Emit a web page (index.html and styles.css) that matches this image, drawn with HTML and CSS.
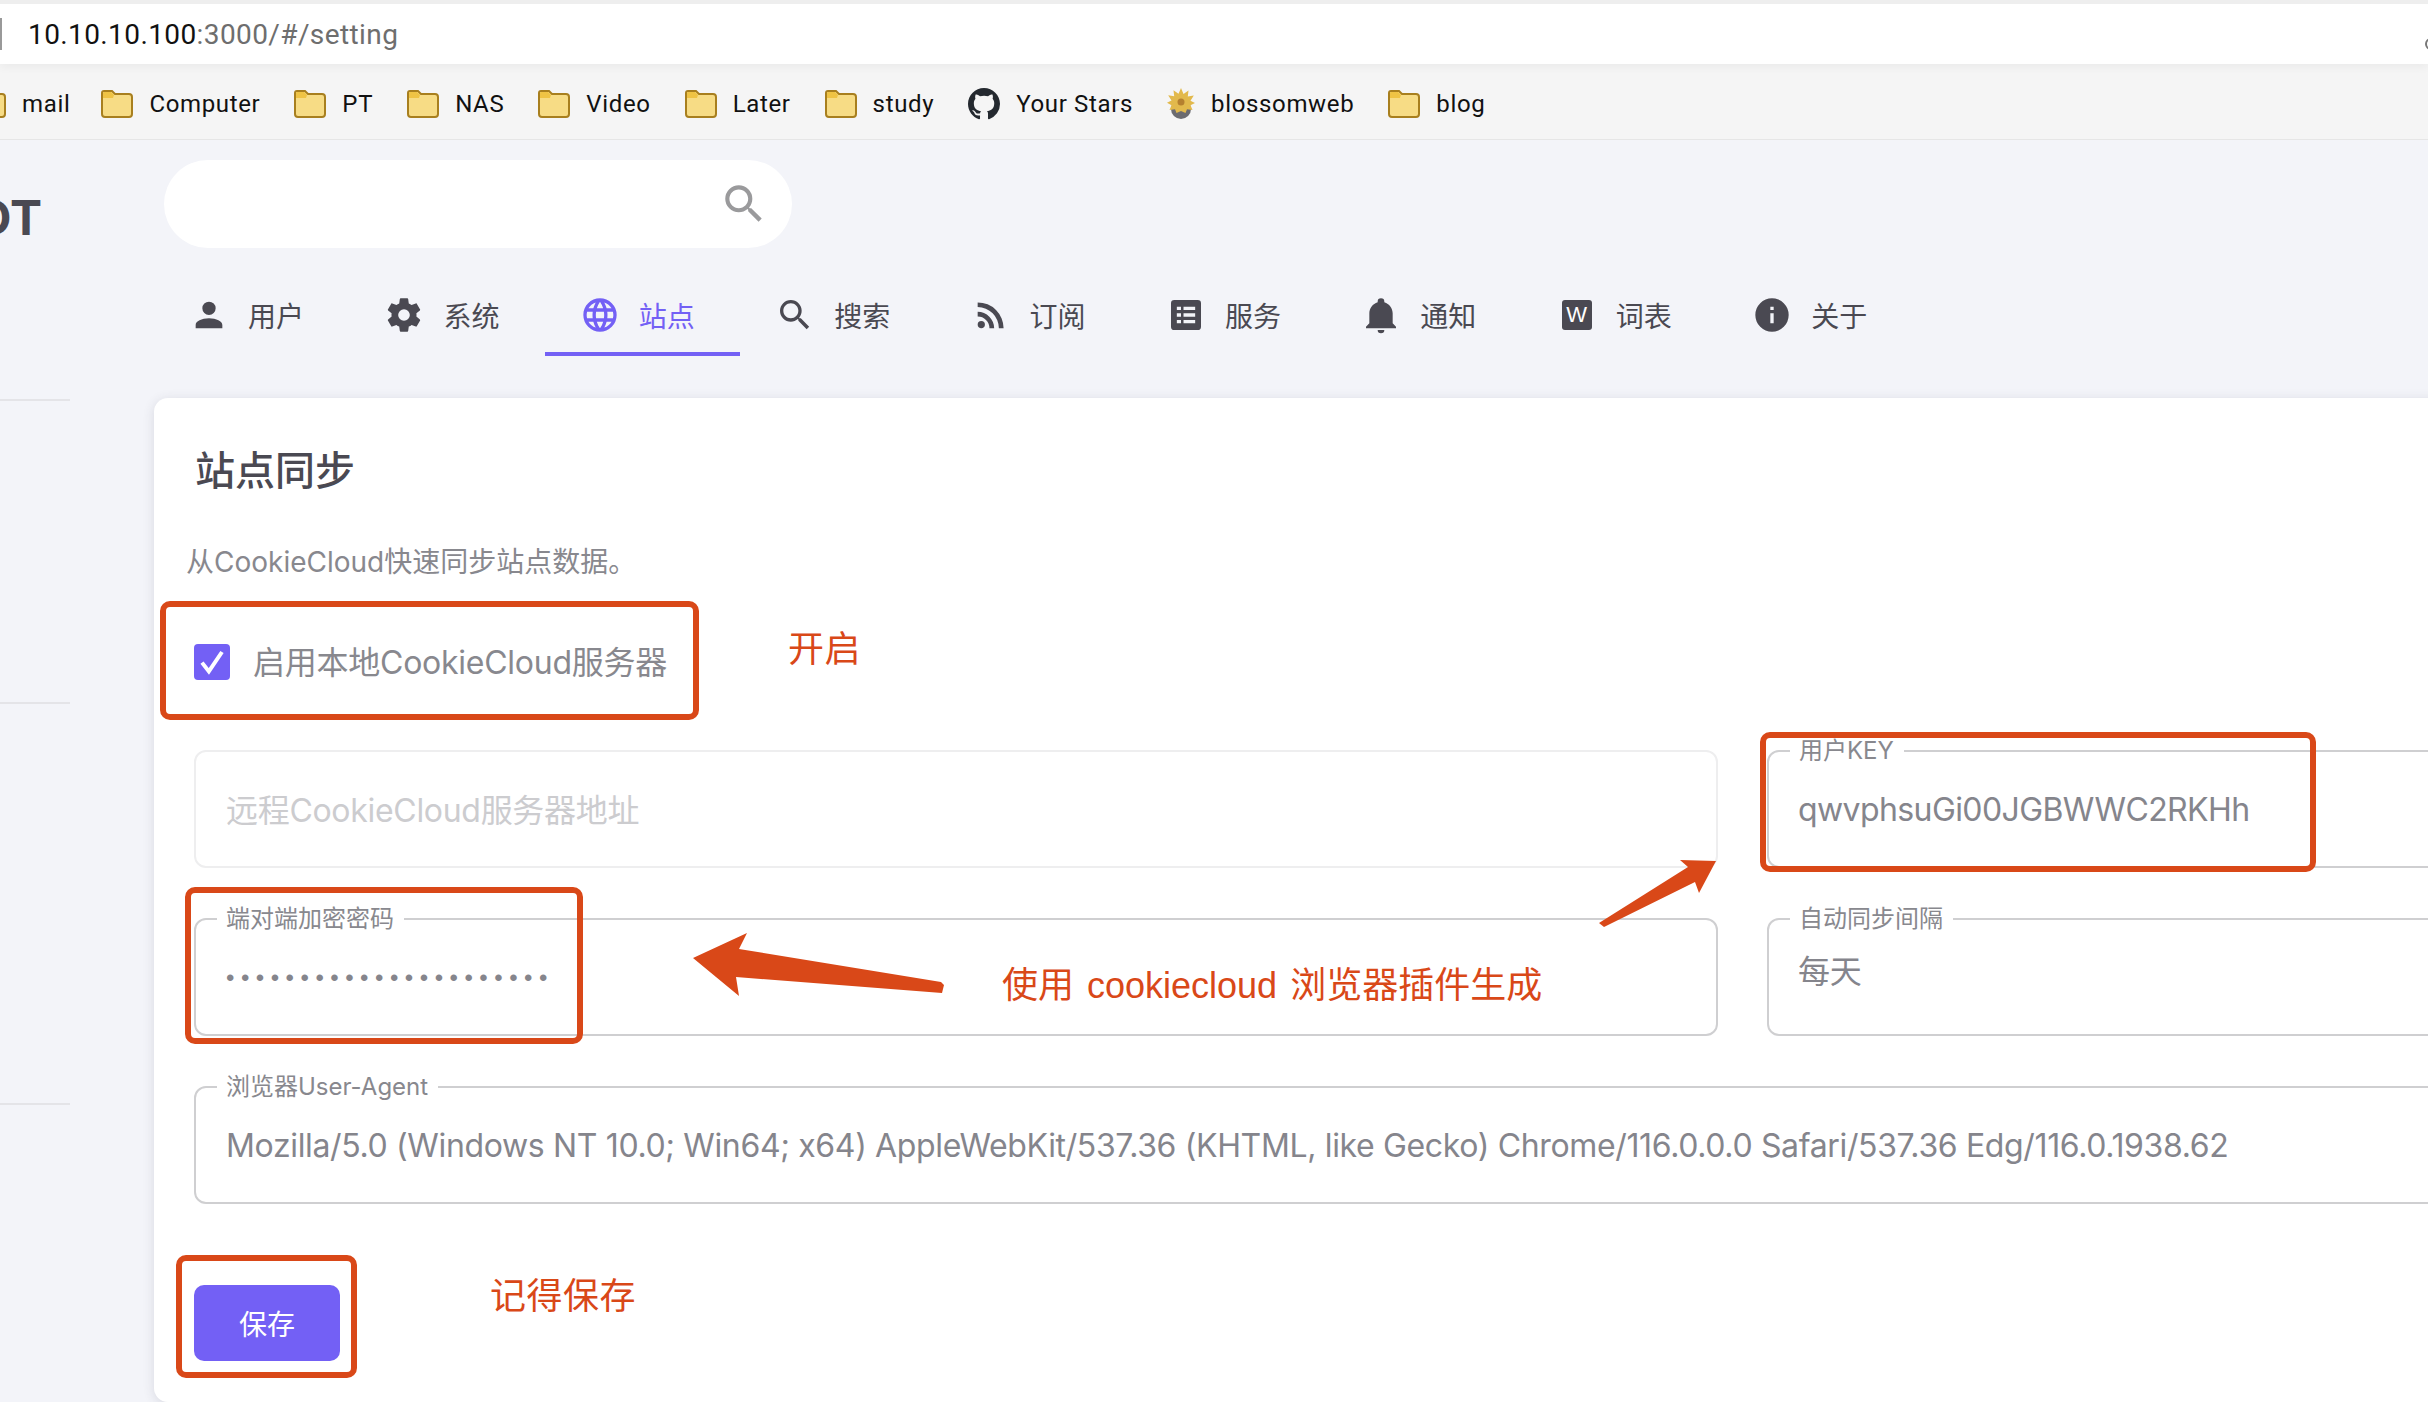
FILE: index.html
```html
<!DOCTYPE html>
<html lang="zh-CN">
<head>
    <meta charset="UTF-8">
    <meta name="viewport" content="width=device-width, initial-scale=1.0">
    <title>MoviePilot 设定</title>
    <link rel="stylesheet" href="styles.css">
</head>
<body>
    <svg class="icon-defs" width="0" height="0">
        <symbol id="folder" viewBox="0 0 32 28">
            <path d="M3 1h8l3 3h14a3 3 0 0 1 3 3v17a3 3 0 0 1-3 3H4a3 3 0 0 1-3-3V3a2 2 0 0 1 2-2z" fill="#f7dc85" stroke="#a87f1e" stroke-width="2"/>
            <path d="M3 2h7l3 3-1 3H2V3z" fill="#efc344"/>
        </symbol>
    </svg>

    <div class="url-bar">
        <span class="url-edge"></span>
        <span class="url-text">10.10.10.100<span class="url-rest">:3000/#/setting</span></span>
        <span class="url-star"></span>
    </div>

    <div class="bookmarks">
        <a class="bookmark bookmark-first"><svg class="folder-icon"><use href="#folder"/></svg>mail</a>
        <a class="bookmark"><svg class="folder-icon"><use href="#folder"/></svg>Computer</a>
        <a class="bookmark"><svg class="folder-icon"><use href="#folder"/></svg>PT</a>
        <a class="bookmark"><svg class="folder-icon"><use href="#folder"/></svg>NAS</a>
        <a class="bookmark"><svg class="folder-icon"><use href="#folder"/></svg>Video</a>
        <a class="bookmark"><svg class="folder-icon"><use href="#folder"/></svg>Later</a>
        <a class="bookmark"><svg class="folder-icon"><use href="#folder"/></svg>study</a>
        <a class="bookmark">
            <svg class="github-icon" viewBox="0 0 16 16"><path fill="#24292f" d="M8 0C3.58 0 0 3.58 0 8c0 3.54 2.29 6.53 5.47 7.59.4.07.55-.17.55-.38 0-.19-.01-.82-.01-1.49-2.01.37-2.53-.49-2.69-.94-.09-.23-.48-.94-.82-1.13-.28-.15-.68-.52-.01-.53.63-.01 1.08.58 1.23.82.72 1.21 1.87.87 2.33.66.07-.52.28-.87.51-1.07-1.78-.2-3.64-.89-3.64-3.95 0-.87.31-1.59.82-2.15-.08-.2-.36-1.02.08-2.12 0 0 .67-.21 2.2.82.64-.18 1.32-.27 2-.27.68 0 1.36.09 2 .27 1.53-1.04 2.2-.82 2.2-.82.44 1.1.16 1.92.08 2.12.51.56.82 1.27.82 2.15 0 3.07-1.87 3.75-3.65 3.95.29.25.54.73.54 1.48 0 1.07-.01 1.93-.01 2.2 0 .21.15.46.55.38A8.013 8.013 0 0016 8c0-4.42-3.58-8-8-8z"/></svg>
            Your Stars
        </a>
        <a class="bookmark">
            <svg class="flower-icon" viewBox="0 0 28 32">
                <circle cx="14" cy="21" r="10" fill="#6b6b70"/>
                <path fill="#e2b94c" d="M14 0l2.500 6 5-3.500-.7 6 6-1-3.300 5.200 4.500 2.300-4.500 2.300 2 4.700-5.500-.7-1.500 3.700-4.500-2-4.500 2-1.500-3.700-5.500.7 2-4.700L0 14.700l4.500-2.300L1.200 7.200l6 1-.7-6 5 3.500z"/>
                <circle cx="14" cy="14" r="3.500" fill="#b5802f"/>
            </svg>
            blossomweb
        </a>
        <a class="bookmark"><svg class="folder-icon"><use href="#folder"/></svg>blog</a>
    </div>

    <div class="app">
        <aside class="sidebar">
            <div class="logo"><span>LOT</span></div>
            <div class="side-line side-line-1"></div>
            <div class="side-line side-line-2"></div>
            <div class="side-line side-line-3"></div>
        </aside>

        <main class="main">
            <div class="search-box">
                <svg class="search-icon" viewBox="0 0 24 24"><path d="M9.5,3A6.5,6.5 0 0,1 16,9.500C16,11.110 15.410,12.590 14.440,13.730L14.710,14H15.500L20.500,19L19,20.500L14,15.500V14.710L13.730,14.440C12.590,15.410 11.110,16 9.500,16A6.500,6.500 0 0,1 3,9.500A6.500,6.500 0 0,1 9.500,3M9.500,5C7,5 5,7 5,9.500C5,12 7,14 9.500,14C12,14 14,12 14,9.500C14,7 12,5 9.500,5Z"/></svg>
            </div>

            <nav class="tabs">
                <a class="tab">
                    <svg class="tab-icon" viewBox="0 0 24 24"><path d="M12,4A4,4 0 0,1 16,8A4,4 0 0,1 12,12A4,4 0 0,1 8,8A4,4 0 0,1 12,4M12,14C16.42,14 20,15.79 20,18V20H4V18C4,15.79 7.58,14 12,14Z"/></svg>
                    用户
                </a>
                <a class="tab">
                    <svg class="tab-icon" viewBox="0 0 24 24"><path d="M12,15.5A3.5,3.5 0 0,1 8.5,12A3.5,3.5 0 0,1 12,8.5A3.5,3.5 0 0,1 15.5,12A3.5,3.5 0 0,1 12,15.5M19.43,12.97C19.47,12.65 19.5,12.33 19.5,12C19.5,11.67 19.47,11.34 19.43,11L21.54,9.37C21.73,9.22 21.78,8.95 21.66,8.73L19.66,5.27C19.54,5.05 19.27,4.96 19.05,5.05L16.56,6.05C16.04,5.66 15.5,5.32 14.87,5.07L14.5,2.42C14.46,2.18 14.25,2 14,2H10C9.75,2 9.54,2.18 9.5,2.42L9.13,5.07C8.5,5.32 7.96,5.66 7.44,6.05L4.95,5.05C4.73,4.96 4.46,5.05 4.34,5.27L2.34,8.73C2.21,8.95 2.27,9.22 2.46,9.37L4.57,11C4.53,11.34 4.5,11.67 4.5,12C4.5,12.33 4.53,12.65 4.57,12.97L2.46,14.63C2.27,14.78 2.21,15.05 2.34,15.27L4.34,18.73C4.46,18.95 4.73,19.03 4.95,18.95L7.44,17.94C7.96,18.34 8.5,18.68 9.13,18.93L9.5,21.58C9.54,21.82 9.75,22 10,22H14C14.25,22 14.46,21.82 14.5,21.58L14.87,18.93C15.5,18.67 16.04,18.34 16.56,17.94L19.05,18.95C19.27,19.03 19.54,18.95 19.66,18.73L21.66,15.27C21.78,15.05 21.73,14.78 21.54,14.63L19.43,12.97Z"/></svg>
                    系统
                </a>
                <a class="tab tab-active">
                    <svg class="tab-icon" viewBox="0 0 24 24"><path d="M16.36,14C16.44,13.34 16.5,12.68 16.5,12C16.5,11.32 16.44,10.66 16.36,10H19.74C19.9,10.64 20,11.31 20,12C20,12.69 19.9,13.36 19.74,14M14.59,19.56C15.19,18.45 15.65,17.25 15.97,16H18.92C17.96,17.65 16.43,18.93 14.59,19.56M14.34,14H9.66C9.56,13.34 9.5,12.68 9.5,12C9.5,11.32 9.56,10.65 9.66,10H14.34C14.43,10.65 14.5,11.32 14.5,12C14.5,12.68 14.43,13.34 14.34,14M12,19.96C11.17,18.76 10.5,17.43 10.09,16H13.91C13.5,17.43 12.83,18.76 12,19.96M8,8H5.08C6.03,6.34 7.57,5.06 9.4,4.44C8.8,5.55 8.35,6.75 8,8M5.08,16H8C8.35,17.25 8.8,18.45 9.4,19.56C7.57,18.93 6.03,17.65 5.08,16M4.26,14C4.1,13.36 4,12.69 4,12C4,11.31 4.1,10.64 4.26,10H7.64C7.56,10.66 7.5,11.32 7.5,12C7.5,12.68 7.56,13.34 7.64,14M12,4.03C12.83,5.23 13.5,6.57 13.91,8H10.09C10.5,6.57 11.17,5.23 12,4.03M18.92,8H15.97C15.65,6.75 15.19,5.55 14.59,4.44C16.43,5.07 17.96,6.34 18.92,8M12,2C6.47,2 2,6.5 2,12A10,10 0 0,0 12,22A10,10 0 0,0 22,12A10,10 0 0,0 12,2Z"/></svg>
                    站点
                </a>
                <a class="tab">
                    <svg class="tab-icon" viewBox="0 0 24 24"><path d="M9.5,3A6.5,6.5 0 0,1 16,9.500C16,11.110 15.410,12.590 14.440,13.730L14.710,14H15.500L20.500,19L19,20.500L14,15.500V14.710L13.730,14.440C12.590,15.410 11.110,16 9.500,16A6.500,6.500 0 0,1 3,9.500A6.500,6.500 0 0,1 9.500,3M9.500,5C7,5 5,7 5,9.500C5,12 7,14 9.500,14C12,14 14,12 14,9.500C14,7 12,5 9.500,5Z"/></svg>
                    搜索
                </a>
                <a class="tab">
                    <svg class="tab-icon" viewBox="0 0 24 24"><path d="M6.18,15.64A2.18,2.18 0 0,1 8.36,17.82C8.36,19 7.38,20 6.18,20C5,20 4,19 4,17.82A2.18,2.18 0 0,1 6.18,15.64M4,4.44A15.56,15.56 0 0,1 19.56,20H16.73A12.73,12.73 0 0,0 4,7.27V4.44M4,10.1A9.9,9.9 0 0,1 13.9,20H11.07A7.07,7.07 0 0,0 4,12.93V10.1Z"/></svg>
                    订阅
                </a>
                <a class="tab">
                    <svg class="tab-icon" viewBox="0 0 24 24"><path fill-rule="evenodd" d="M5 3h14a2 2 0 0 1 2 2v14a2 2 0 0 1-2 2H5a2 2 0 0 1-2-2V5a2 2 0 0 1 2-2zM6.500 7v2h2.500V7zM10.500 7v2h7V7zM6.500 11v2h2.500v-2zM10.500 11v2h7v-2zM6.500 15v2h2.500v-2zM10.500 15v2h7v-2z"/></svg>
                    服务
                </a>
                <a class="tab">
                    <svg class="tab-icon" viewBox="0 0 24 24"><path d="M21,19V20H3V19L5,17V11C5,7.9 7.03,5.17 10,4.29C10,4.19 10,4.1 10,4A2,2 0 0,1 12,2A2,2 0 0,1 14,4C14,4.1 14,4.19 14,4.29C16.97,5.17 19,7.9 19,11V17L21,19M14,21A2,2 0 0,1 12,23A2,2 0 0,1 10,21"/></svg>
                    通知
                </a>
                <a class="tab">
                    <span class="word-icon">W</span>
                    词表
                </a>
                <a class="tab">
                    <svg class="tab-icon" viewBox="0 0 24 24"><path d="M13,9H11V7H13M13,17H11V11H13M12,2A10,10 0 0,0 2,12A10,10 0 0,0 12,22A10,10 0 0,0 22,12A10,10 0 0,0 12,2Z"/></svg>
                    关于
                </a>
            </nav>

            <section class="card">
                <h2 class="card-title">站点同步</h2>
                <p class="card-sub">从CookieCloud快速同步站点数据。</p>

                <label class="check-row">
                    <span class="checkbox">
                        <svg viewBox="0 0 24 24"><path d="M4 12.500l5.500 7L20 4" fill="none" stroke="#fff" stroke-width="3.200"/></svg>
                    </span>
                    <span class="check-text">启用本地CookieCloud服务器</span>
                </label>

                <div class="field-grid">
                    <div class="field field-disabled"><span class="placeholder">远程CookieCloud服务器地址</span></div>
                    <div class="field">
                        <span class="field-label">用户KEY</span>
                        <span class="field-value field-key">qwvphsuGi00JGBWWC2RKHh</span>
                    </div>
                    <div class="field">
                        <span class="field-label">端对端加密密码</span>
                        <span class="field-dots">••••••••••••••••••••••</span>
                    </div>
                    <div class="field field-select">
                        <span class="field-label">自动同步间隔</span>
                        <span class="field-value">每天</span>
                    </div>
                    <div class="field field-wide">
                        <span class="field-label">浏览器User-Agent</span>
                        <span class="field-value">Mozilla/5.0 (Windows NT 10.0; Win64; x64) AppleWebKit/537.36 (KHTML, like Gecko) Chrome/116.0.0.0 Safari/537.36 Edg/116.0.1938.62</span>
                    </div>
                </div>

                <button class="save-btn">保存</button>
            </section>
        </main>
    </div>

    <!-- screenshot annotations drawn over the page -->
    <div class="mark mark-check"></div>
    <div class="mark mark-key"></div>
    <div class="mark mark-password"></div>
    <div class="mark mark-save"></div>
    <div class="note note-open">开启</div>
    <div class="note note-plugin">使用 cookiecloud 浏览器插件生成</div>
    <div class="note note-save">记得保存</div>
    <svg class="arrows" viewBox="0 0 2428 1402">
        <polygon points="1716,861 1680,860 1688,867 1599,923 1604,927 1695,882 1699,893"/>
        <polygon points="693,958 747,933 739,949 941,982 944,985 942,993 736,977 739,996"/>
    </svg>
</body>
</html>
```

FILE: styles.css
```css
* {
    box-sizing: border-box;
}
html, body {
    margin: 0;
    height: 1402px;
    overflow: hidden;
}
body {
    position: relative;
    font-family: Inter, "Noto Sans CJK SC", sans-serif;
    background-color: #f3f4f9;
    color: #4a4952;
}
.icon-defs {
    position: absolute;
}

/* browser chrome */
.url-bar {
    display: flex;
    align-items: center;
    height: 64px;
    padding-left: 28px;
    border-top: 4px solid #eeeeee;
    background: white;
    position: relative;
    box-shadow: 0 4px 8px rgba(0, 0, 0, 0.04);
}
.url-edge {
    position: absolute;
    left: 0;
    top: 14px;
    width: 2px;
    height: 32px;
    background-color: #999;
}
.url-text {
    font-family: Roboto, sans-serif;
    font-size: 28px;
    letter-spacing: 0.4px;
    color: #111;
}
.url-rest {
    color: #6e6e6e;
}
.url-star {
    position: absolute;
    left: 2425px;
    top: 34px;
    width: 12px;
    height: 12px;
    border: 2px solid #777;
    border-radius: 50%;
}
.bookmarks {
    display: flex;
    align-items: center;
    gap: 34px;
    height: 76px;
    margin-left: -26px;
    padding-top: 5px;
    background-color: #f5f5f5;
    border-bottom: 1px solid #e6e6e6;
}
.bookmark {
    display: flex;
    align-items: center;
    gap: 16px;
    font-family: Roboto, sans-serif;
    font-size: 24px;
    letter-spacing: 0.65px;
    color: #111;
    white-space: nowrap;
}
.bookmark-first {
    margin-right: -3px;
}
.folder-icon {
    width: 32px;
    height: 28px;
}
.github-icon {
    width: 32px;
    height: 32px;
}
.flower-icon {
    width: 28px;
    height: 32px;
}

/* app */
.app {
    display: flex;
}
.sidebar {
    width: 154px;
    flex-shrink: 0;
}
.logo {
    display: flex;
    justify-content: flex-end;
    align-items: center;
    width: 42px;
    height: 154px;
    overflow: hidden;
    font-size: 48px;
    font-weight: 700;
    color: #4a4952;
}
.side-line {
    width: 70px;
    height: 2px;
    background-color: #e4e4e8;
}
.side-line-1 {
    margin-top: 105px;
}
.side-line-2 {
    margin-top: 301px;
}
.side-line-3 {
    margin-top: 399px;
}
.main {
    width: 2274px;
    padding-top: 20px;
}
.search-box {
    display: flex;
    align-items: center;
    justify-content: flex-end;
    width: 628px;
    height: 88px;
    margin-left: 10px;
    padding-right: 23px;
    background: white;
    border-radius: 44px;
}
.search-icon {
    width: 50px;
    height: 50px;
    fill: #9a9a9c;
}
.tabs {
    display: flex;
    margin-top: 26px;
}
.tab {
    display: flex;
    align-items: center;
    gap: 19px;
    width: 195.4px;
    height: 82px;
    padding-left: 35px;
    font-size: 28px;
    color: #4a4952;
}
.tab-icon {
    width: 40px;
    height: 40px;
    fill: #4a4952;
}
.word-icon {
    display: flex;
    align-items: center;
    justify-content: center;
    width: 30px;
    height: 30px;
    margin: 0 5px;
    background-color: #4a4952;
    border-radius: 3px;
    color: white;
    font-family: "Liberation Sans", sans-serif;
    font-size: 22px;
}
.tab-active {
    color: #7360f5;
    border-bottom: 4px solid #7360f5;
    padding-top: 4px;
}
.tab-active .tab-icon {
    fill: #7360f5;
}

/* card */
.card {
    width: 2400px;
    height: 1004px;
    margin-top: 42px;
    padding: 49px 40px 0;
    background: white;
    border-radius: 14px;
    box-shadow: 0 2px 12px rgba(60, 60, 80, 0.14);
}
.card-title {
    margin: 0 0 0 1px;
    font-size: 40px;
    font-weight: 500;
    line-height: 48px;
    color: #4a4952;
}
.card-sub {
    margin: 47px 0 0 -8px;
    font-size: 28px;
    line-height: 40px;
    color: #88888e;
}
.check-row {
    display: flex;
    align-items: center;
    gap: 23px;
    height: 40px;
    margin-top: 60px;
    font-size: 32px;
    color: #88888e;
}
.check-text {
    padding-bottom: 4px;
    letter-spacing: -0.25px;
}
.checkbox {
    display: flex;
    width: 36px;
    height: 36px;
    padding: 3px;
    background-color: #7360f5;
    border-radius: 4px;
}
.field-grid {
    display: grid;
    grid-template-columns: 1524px 760px;
    gap: 50px 49px;
    margin-top: 68px;
}
.field {
    position: relative;
    display: flex;
    align-items: center;
    height: 118px;
    padding-left: 30px;
    border: 2px solid #cfcfd1;
    border-radius: 12px;
    font-size: 32px;
    color: #85858c;
    white-space: nowrap;
}
.field-disabled {
    border-color: #eeeeef;
}
.field-wide {
    grid-column: 1 / 3;
}
.field-select {
    align-items: flex-start;
    padding-top: 26px;
    padding-left: 29px;
}
.field-value {
    letter-spacing: -0.35px;
}
.field-key {
    margin-left: -1px;
    letter-spacing: -0.6px;
}
.field-label {
    position: absolute;
    left: 21px;
    top: -15px;
    padding: 0 10px 0 9px;
    background: white;
    font-size: 24px;
    line-height: 28px;
    color: #88888e;
}
.placeholder {
    padding-bottom: 2px;
    letter-spacing: -0.3px;
    color: #cccccf;
}
.field-dots {
    padding-top: 2px;
    font-family: "Liberation Sans", sans-serif;
    font-size: 24px;
    letter-spacing: 6.5px;
}
.save-btn {
    display: block;
    width: 146px;
    height: 76px;
    margin-top: 81px;
    padding: 0;
    border: none;
    border-radius: 10px;
    background-color: #7360f5;
    color: white;
    font-family: inherit;
    font-size: 28px;
}

/* annotations */
.mark {
    position: absolute;
    border: 6px solid #d94818;
    border-radius: 10px;
}
.mark-check {
    left: 160px;
    top: 601px;
    width: 539px;
    height: 119px;
}
.mark-key {
    left: 1760px;
    top: 732px;
    width: 556px;
    height: 140px;
}
.mark-password {
    left: 185px;
    top: 887px;
    width: 398px;
    height: 157px;
}
.mark-save {
    left: 176px;
    top: 1255px;
    width: 181px;
    height: 123px;
}
.note {
    position: absolute;
    font-family: "Liberation Sans", "Noto Sans CJK SC", sans-serif;
    font-size: 36px;
    line-height: 44px;
    color: #d94818;
    white-space: nowrap;
}
.note-open {
    left: 788px;
    top: 628px;
    letter-spacing: 0.5px;
}
.note-plugin {
    left: 1002px;
    top: 964px;
    word-spacing: 3px;
}
.note-save {
    left: 490px;
    top: 1275px;
    letter-spacing: 0.5px;
}
.arrows {
    position: absolute;
    left: 0;
    top: 0;
    width: 2428px;
    height: 1402px;
    fill: #d94818;
}
```
